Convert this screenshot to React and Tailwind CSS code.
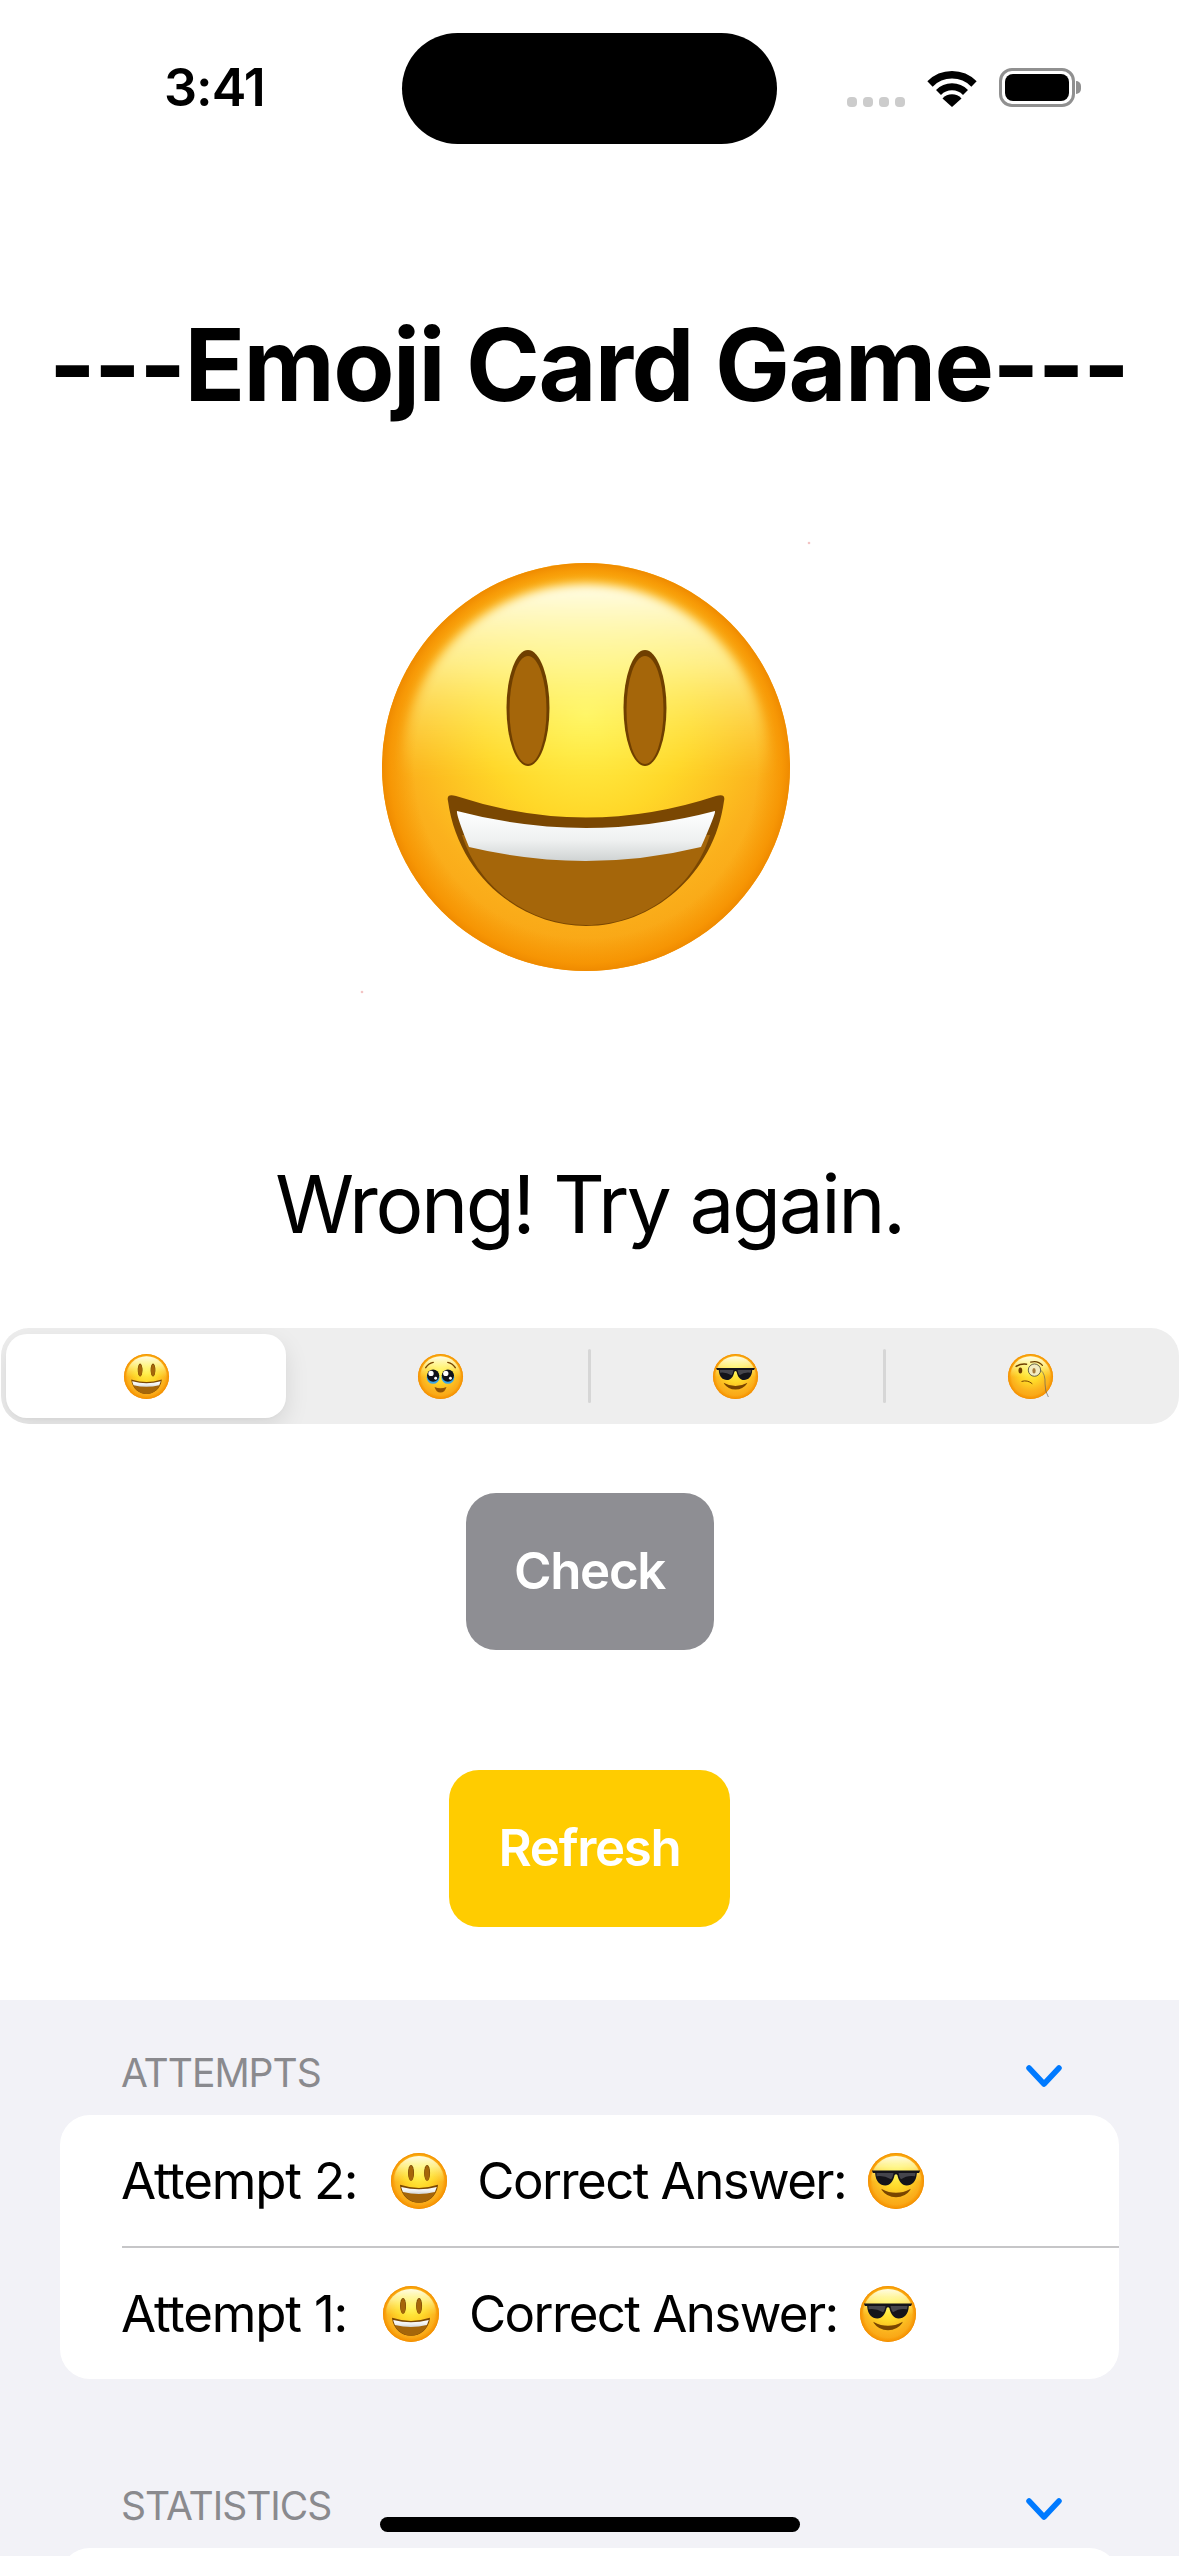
import React, { useId } from 'react';

// shared face: gradient ball, everything else goes on top
const Face = ({ size, className = '', children }) => {
  const id = useId().replace(/[^a-zA-Z0-9]/g, '');
  return (
    <svg viewBox="0 0 408 408" width={size} height={size} className={`shrink-0 overflow-visible ${className}`}>
      <defs>
        <radialGradient id={`${id}b`} cx="50%" cy="37%" r="68%">
          <stop offset="0%" stopColor="#fff550" />
          <stop offset="38%" stopColor="#ffd728" />
          <stop offset="68%" stopColor="#fbb11d" />
          <stop offset="100%" stopColor="#f79c0e" />
        </radialGradient>
        <radialGradient id={`${id}r`} cx="50%" cy="50%" r="50%">
          <stop offset="84%" stopColor="#f79400" stopOpacity="0" />
          <stop offset="96%" stopColor="#f69200" stopOpacity="0.8" />
          <stop offset="100%" stopColor="#ef8a00" />
        </radialGradient>
        <linearGradient id={`${id}h`} x1="0" y1="0" x2="0" y2="1">
          <stop offset="0%" stopColor="#fffff2" stopOpacity="0.95" />
          <stop offset="22%" stopColor="#fffdb0" stopOpacity="0.7" />
          <stop offset="52%" stopColor="#fff060" stopOpacity="0" />
        </linearGradient>
        <linearGradient id={`${id}t`} x1="0" y1="0" x2="0" y2="1">
          <stop offset="0%" stopColor="#ffffff" />
          <stop offset="60%" stopColor="#eef0f0" />
          <stop offset="100%" stopColor="#cfd3d3" />
        </linearGradient>
        <filter id={`${id}f`} x="-10%" y="-10%" width="120%" height="120%">
          <feGaussianBlur stdDeviation="5" />
        </filter>
      </defs>
      <circle cx="204" cy="204" r="204" fill={`url(#${id}b)`} />
      <circle cx="204" cy="204" r="204" fill={`url(#${id}r)`} />
      <circle cx="204" cy="205" r="184" fill={`url(#${id}h)`} filter={`url(#${id}f)`} />
      {children(id)}
    </svg>
  );
};

const Smile = ({ size, specks }) => (
  <Face size={size}>
    {(id) => (
      <>
        <ellipse cx="146" cy="145" rx="21.5" ry="58" fill="#6f3f00" />
        <ellipse cx="146" cy="147" rx="18.5" ry="54" fill="#a5660a" />
        <ellipse cx="263" cy="145" rx="21.5" ry="58" fill="#6f3f00" />
        <ellipse cx="263" cy="147" rx="18.5" ry="54" fill="#a5660a" />
        <path d="M66 238Q64 230 74 233Q204 276 334 233Q344 230 342 238C332 312 270 363 204 363C138 363 76 312 66 238Z" fill="#7a4702" />
        <path d="M80 272H328C312 324 262 362 204 362C146 362 96 324 80 272Z" fill="#a5660a" />
        <path d="M75 248Q204 282 333 248Q334 250 319 284Q204 312 87 284Q74 252 75 248Z" fill={`url(#${id}t)`} />
        {specks && (
          <>
            <circle cx="427" cy="-20" r="1.3" fill="#f3c4c4" />
            <circle cx="-20" cy="429" r="1.3" fill="#f3c4c4" />
          </>
        )}
      </>
    )}
  </Face>
);

const Pleading = ({ size }) => (
  <Face size={size}>
    {() => (
      <>
        <path d="M70 124Q92 88 138 76" fill="none" stroke="#7a4500" strokeWidth="13" strokeLinecap="round" />
        <path d="M338 124Q316 88 270 76" fill="none" stroke="#7a4500" strokeWidth="13" strokeLinecap="round" />
        <circle cx="137" cy="212" r="58" fill="#39a6ea" />
        <circle cx="271" cy="212" r="58" fill="#39a6ea" />
        <circle cx="137" cy="196" r="55" fill="#10131a" />
        <circle cx="271" cy="196" r="55" fill="#10131a" />
        <circle cx="118" cy="176" r="24" fill="#fff" />
        <circle cx="252" cy="176" r="24" fill="#fff" />
        <circle cx="160" cy="220" r="13" fill="#fff" />
        <circle cx="294" cy="220" r="13" fill="#fff" />
        <path d="M150 300Q204 322 258 300Q244 350 204 350Q164 350 150 300Z" fill="#8f5305" />
      </>
    )}
  </Face>
);

const Shades = ({ size }) => (
  <Face size={size}>
    {() => (
      <>
        <path d="M28 128H380L372 146H356C352 210 320 236 282 236C246 236 224 206 214 160Q204 150 194 160C184 206 162 236 126 236C88 236 56 210 52 146H36Z" fill="#14141a" />
        <path d="M62 146H186C182 170 176 184 168 192Q112 160 62 170Z" fill="#45454c" />
        <path d="M222 146H346C346 156 344 164 342 170Q286 160 240 192Q226 176 222 146Z" fill="#45454c" />
        <path d="M100 262Q204 318 308 262Q312 258 308 270Q272 322 204 322Q136 322 100 270Q96 258 100 262Z" fill="#7a4500" />
      </>
    )}
  </Face>
);

const Monocle = ({ size }) => (
  <Face size={size}>
    {() => (
      <>
        <path d="M74 112Q120 84 168 92" fill="none" stroke="#6f3f00" strokeWidth="14" strokeLinecap="round" />
        <ellipse cx="112" cy="150" rx="17" ry="27" fill="#6f3f00" />
        <path d="M205 74Q270 54 312 104" fill="none" stroke="#6f3f00" strokeWidth="11" strokeLinecap="round" />
        <circle cx="240" cy="146" r="56" fill="#f3ecc2" stroke="#3a3a34" strokeWidth="7" />
        <ellipse cx="236" cy="152" rx="15" ry="25" fill="#a67b3c" />
        <path d="M126 248Q176 232 218 268" fill="none" stroke="#7a4500" strokeWidth="9" strokeLinecap="round" />
        <path d="M296 146Q340 180 336 270Q334 340 366 390" fill="none" stroke="#5f5f5f" strokeWidth="6" />
      </>
    )}
  </Face>
);

const Chevron = () => (
  <svg width="36" height="22" viewBox="0 0 36 22" fill="none" stroke="#007aff" strokeWidth="5.5" strokeLinecap="round" strokeLinejoin="round" className="mt-[6px]">
    <path d="M3 3L18 19L33 3" />
  </svg>
);

const Wifi = () => (
  <svg width="50" height="37" viewBox="0 0 50 37" fill="none" className="mr-[22px]">
    <path d="M3 14A31 31 0 0 1 47 14" stroke="#000" strokeWidth="7.5" />
    <path d="M11.5 22.5A19 19 0 0 1 38.5 22.5" stroke="#000" strokeWidth="7" />
    <path d="M25 37L15.5 28.5A13 13 0 0 1 34.5 28.5Z" fill="#000" />
  </svg>
);

const Segment = ({ width, divider, children }) => (
  <div className={`relative flex items-center justify-center h-full ${width}`}>
    {divider && <div className="absolute left-0 top-[21px] h-[54px] w-[3px] rounded-full bg-[#d6d6d6]" />}
    {children}
  </div>
);

const SectionHeader = ({ title }) => (
  <div className="flex items-center justify-between pl-[61px] pr-[57px] h-[48px]">
    <span className="text-[39px] leading-[48px] tracking-[-1px] text-[#8a8a8e]">{title}</span>
    <Chevron />
  </div>
);

const AttemptRow = ({ label, smileGap }) => (
  <div className="flex items-center h-[131px] pl-[61px] text-[51px] leading-[62px] tracking-[-1.2px] text-black">
    <span>{label}</span>
    <span className={smileGap}><Smile size={56} /></span>
    <span className="ml-[30px] tracking-[-1.6px]">Correct Answer:</span>
    <span className="ml-[22px]"><Shades size={56} /></span>
  </div>
);

export default function App() {
  return (
    <div className="relative w-[1179px] h-[2556px] overflow-hidden bg-white flex flex-col font-[Inter,sans-serif]">
      {/* status bar */}
      <div className="absolute left-[402px] top-[33px] w-[375px] h-[111px] rounded-[56px] bg-black" />
      <div className="shrink-0 flex items-end h-[305px] pb-[198px] pl-[164px] pr-[98px]">
        <span className="text-[52px] leading-[39px] tracking-[-1px] font-semibold text-black">3:41</span>
        <div className="ml-auto flex items-end">
          <div className="flex gap-[6px] mr-[22px]">
            <div className="w-[10px] h-[10px] rounded-[4px] bg-[#cccccc]" />
            <div className="w-[10px] h-[10px] rounded-[4px] bg-[#cccccc]" />
            <div className="w-[10px] h-[10px] rounded-[4px] bg-[#cccccc]" />
            <div className="w-[10px] h-[10px] rounded-[4px] bg-[#cccccc]" />
          </div>
          <Wifi />
          <div className="flex items-center">
            <div className="w-[76px] h-[39px] rounded-[13px] border-[3px] border-[#909090] p-[3px]">
              <div className="w-full h-full rounded-[8px] bg-black" />
            </div>
            <div className="w-[5px] h-[13px] ml-[1px] rounded-r-full bg-[#909090]" />
          </div>
        </div>
      </div>

      <h1 className="shrink-0 text-center text-[100px] leading-[120px] tracking-[-1.6px] font-bold text-black pr-[2px]">---Emoji Card Game---</h1>

      <div className="shrink-0 flex justify-center mt-[138px]">
        <div className="mr-[7px]"><Smile size={408} specks /></div>
      </div>

      <p className="shrink-0 mt-[183px] text-center text-[80px] leading-[100px] tracking-[-2.4px] text-black">Wrong! Try again.</p>

      <div className="shrink-0 mt-[74px] ml-[1px] flex h-[96px] rounded-[28px] bg-[#eeeeee] overflow-hidden">
        <div className="w-[292px] h-full pl-[5px] pr-[7px] py-[6px]">
          <div className="h-full flex items-center justify-center rounded-[21px] bg-white shadow-[0_9px_24px_rgba(0,0,0,0.1),0_2px_3px_rgba(0,0,0,0.02)]">
            <Smile size={45} />
          </div>
        </div>
        <Segment width="w-[295px]"><Pleading size={45} /></Segment>
        <Segment width="w-[295px]" divider><Shades size={45} /></Segment>
        <Segment width="w-[295px]" divider><Monocle size={45} /></Segment>
      </div>

      <button className="shrink-0 self-center mt-[69px] w-[248px] h-[157px] rounded-[30px] bg-[#8e8e93] text-[51px] tracking-[-1.3px] font-semibold text-white">Check</button>
      <button className="shrink-0 self-center mt-[120px] w-[281px] h-[157px] rounded-[30px] bg-[#ffcc00] text-[51px] tracking-[-1.3px] font-semibold text-white">Refresh</button>

      <div className="mt-[73px] flex-1 bg-[#f2f2f7] pt-[49px] px-[60px]">
        <SectionHeader title="ATTEMPTS" />
        <div className="mt-[18px] rounded-[30px] bg-white overflow-hidden">
          <AttemptRow label="Attempt 2:" smileGap="ml-[34px]" />
          <div className="ml-[62px] h-[2px] bg-[#c6c6c8]" />
          <AttemptRow label="Attempt 1:" smileGap="ml-[36px]" />
        </div>
        <div className="mt-[103px]"><SectionHeader title="STATISTICS" /></div>
        <div className="mt-[18px] h-[100px] rounded-[30px] bg-white" />
      </div>

      <div className="absolute left-[380px] top-[2517px] w-[420px] h-[15px] rounded-full bg-black" />
    </div>
  );
}
